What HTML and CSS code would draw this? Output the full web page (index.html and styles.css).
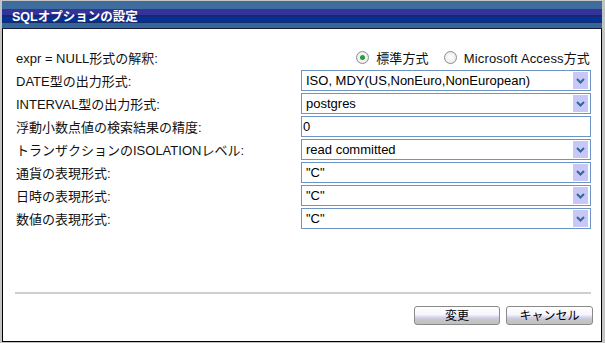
FILE: index.html
```html
<!DOCTYPE html>
<html lang="ja">
<head>
<meta charset="utf-8">
<title>SQLオプションの設定</title>
<link rel="stylesheet" href="styles.css">
</head>
<body>
<div class="window">
  <div class="titlebar"><span class="title">SQLオプションの設定</span></div>
  <div class="content">
    <div class="form">
      <div class="label">expr = NULL形式の解釈:</div>
      <div class="radios">
        <span class="radio checked"></span><span class="rtext">標準方式</span>
        <span class="radio"></span><span class="rtext">Microsoft Access方式</span>
      </div>

      <div class="label">DATE型の出力形式:</div>
      <div class="select"><span class="val">ISO, MDY(US,NonEuro,NonEuropean)</span><span class="arrow"><svg width="9" height="6" viewBox="0 0 9 6"><path d="M1 1 L4.5 4.5 L8 1" fill="none" stroke="#336699" stroke-width="2"/></svg></span></div>

      <div class="label">INTERVAL型の出力形式:</div>
      <div class="select"><span class="val">postgres</span><span class="arrow"><svg width="9" height="6" viewBox="0 0 9 6"><path d="M1 1 L4.5 4.5 L8 1" fill="none" stroke="#336699" stroke-width="2"/></svg></span></div>

      <div class="label">浮動小数点値の検索結果の精度:</div>
      <div class="input"><span class="val">0</span></div>

      <div class="label">トランザクションのISOLATIONレベル:</div>
      <div class="select"><span class="val">read committed</span><span class="arrow"><svg width="9" height="6" viewBox="0 0 9 6"><path d="M1 1 L4.5 4.5 L8 1" fill="none" stroke="#336699" stroke-width="2"/></svg></span></div>

      <div class="label">通貨の表現形式:</div>
      <div class="select"><span class="val">"C"</span><span class="arrow"><svg width="9" height="6" viewBox="0 0 9 6"><path d="M1 1 L4.5 4.5 L8 1" fill="none" stroke="#336699" stroke-width="2"/></svg></span></div>

      <div class="label">日時の表現形式:</div>
      <div class="select"><span class="val">"C"</span><span class="arrow"><svg width="9" height="6" viewBox="0 0 9 6"><path d="M1 1 L4.5 4.5 L8 1" fill="none" stroke="#336699" stroke-width="2"/></svg></span></div>

      <div class="label">数値の表現形式:</div>
      <div class="select"><span class="val">"C"</span><span class="arrow"><svg width="9" height="6" viewBox="0 0 9 6"><path d="M1 1 L4.5 4.5 L8 1" fill="none" stroke="#336699" stroke-width="2"/></svg></span></div>
    </div>
    <div class="separator"></div>
    <div class="buttons">
      <button class="btn ok">変更</button>
      <button class="btn cancel">キャンセル</button>
    </div>
  </div>
</div>
</body>
</html>
```

FILE: styles.css
```css
html, body {
  margin: 0;
  padding: 0;
}
body {
  width: 605px;
  height: 343px;
  background: #c3c3c3;
  font-family: "Liberation Sans", "Noto Sans CJK JP", sans-serif;
  font-size: 13px;
  color: #111;
  overflow: hidden;
}
.window {
  box-sizing: border-box;
  margin: 1px 0 0 2px;
  width: 600px;
  height: 341px;
  background: #fff;
  border: 1px solid #000;
  border-top: none;
}
.titlebar {
  height: 27px;
  margin: 0 -1px;
  border-bottom: 1px solid #1a1a3a;
  background: linear-gradient(to bottom,
    #3e6c9c 0, #3e6c9c 8px,
    #333399 8px, #333399 14px,
    #1c2470 14px, #1c2470 16px,
    #003399 16px, #003399 21px,
    #1a2a66 21px, #1a2a66 22px,
    #336699 22px, #336699 27px);
  display: flex;
  align-items: center;
  padding-left: 10px;
}
.title {
  color: #fff;
  font-weight: bold;
  font-size: 12.5px;
  margin-top: 1px;
}
.content {
  padding: 18px 8px 0 13px;
}
.form {
  display: grid;
  grid-template-columns: 285px 290px;
  grid-auto-rows: 21px;
  row-gap: 2px;
}
.label {
  display: flex;
  align-items: center;
  white-space: nowrap;
}
.radios {
  display: flex;
  align-items: center;
  justify-content: flex-end;
  padding-right: 1px;
}
.radio {
  box-sizing: border-box;
  width: 13px;
  height: 13px;
  border-radius: 50%;
  border: 1px solid #8a8a9a;
  background: radial-gradient(circle, #fff 0, #f0f0f0 60%, #dcdcdc 100%);
  display: inline-flex;
  align-items: center;
  justify-content: center;
  margin-right: 7px;
}
.radio.checked::after {
  content: "";
  width: 5px;
  height: 5px;
  border-radius: 50%;
  background: #2a9a3a;
}
.rtext {
  margin-right: 15px;
  letter-spacing: 0.15px;
}
.rtext:last-child {
  margin-right: 0;
}
.select, .input {
  box-sizing: border-box;
  border: 1px solid #6c94c4;
  background: #fff;
  display: flex;
  align-items: center;
  justify-content: space-between;
  height: 21px;
}
.val {
  padding-left: 4px;
  white-space: nowrap;
  color: #000;
}
.input .val {
  padding-left: 1px;
}
.arrow {
  width: 15px;
  height: 17px;
  margin-right: 2px;
  background: #c8c8f8;
  display: flex;
  align-items: center;
  justify-content: center;
}
.separator {
  margin-top: 63px;
  height: 2px;
  background: #cfcfcf;
  margin-left: -1px;
  width: 576px;
}
.buttons {
  display: flex;
  justify-content: flex-end;
  gap: 6px;
  margin-top: 12px;
}
.btn {
  box-sizing: border-box;
  height: 19px;
  border: 1px solid #8a8a8a;
  border-radius: 3px;
  background: linear-gradient(to bottom, #ffffff 0, #f6f6fc 45%, #d4d4f0 60%, #c6c6c6 75%, #c0c0c0 100%);
  font-family: "Liberation Sans", "Noto Sans CJK JP", sans-serif;
  font-size: 12px;
  color: #000;
  padding: 0;
  line-height: 16px;
}
.btn.ok {
  width: 86px;
}
.btn.cancel {
  width: 87px;
}
```
